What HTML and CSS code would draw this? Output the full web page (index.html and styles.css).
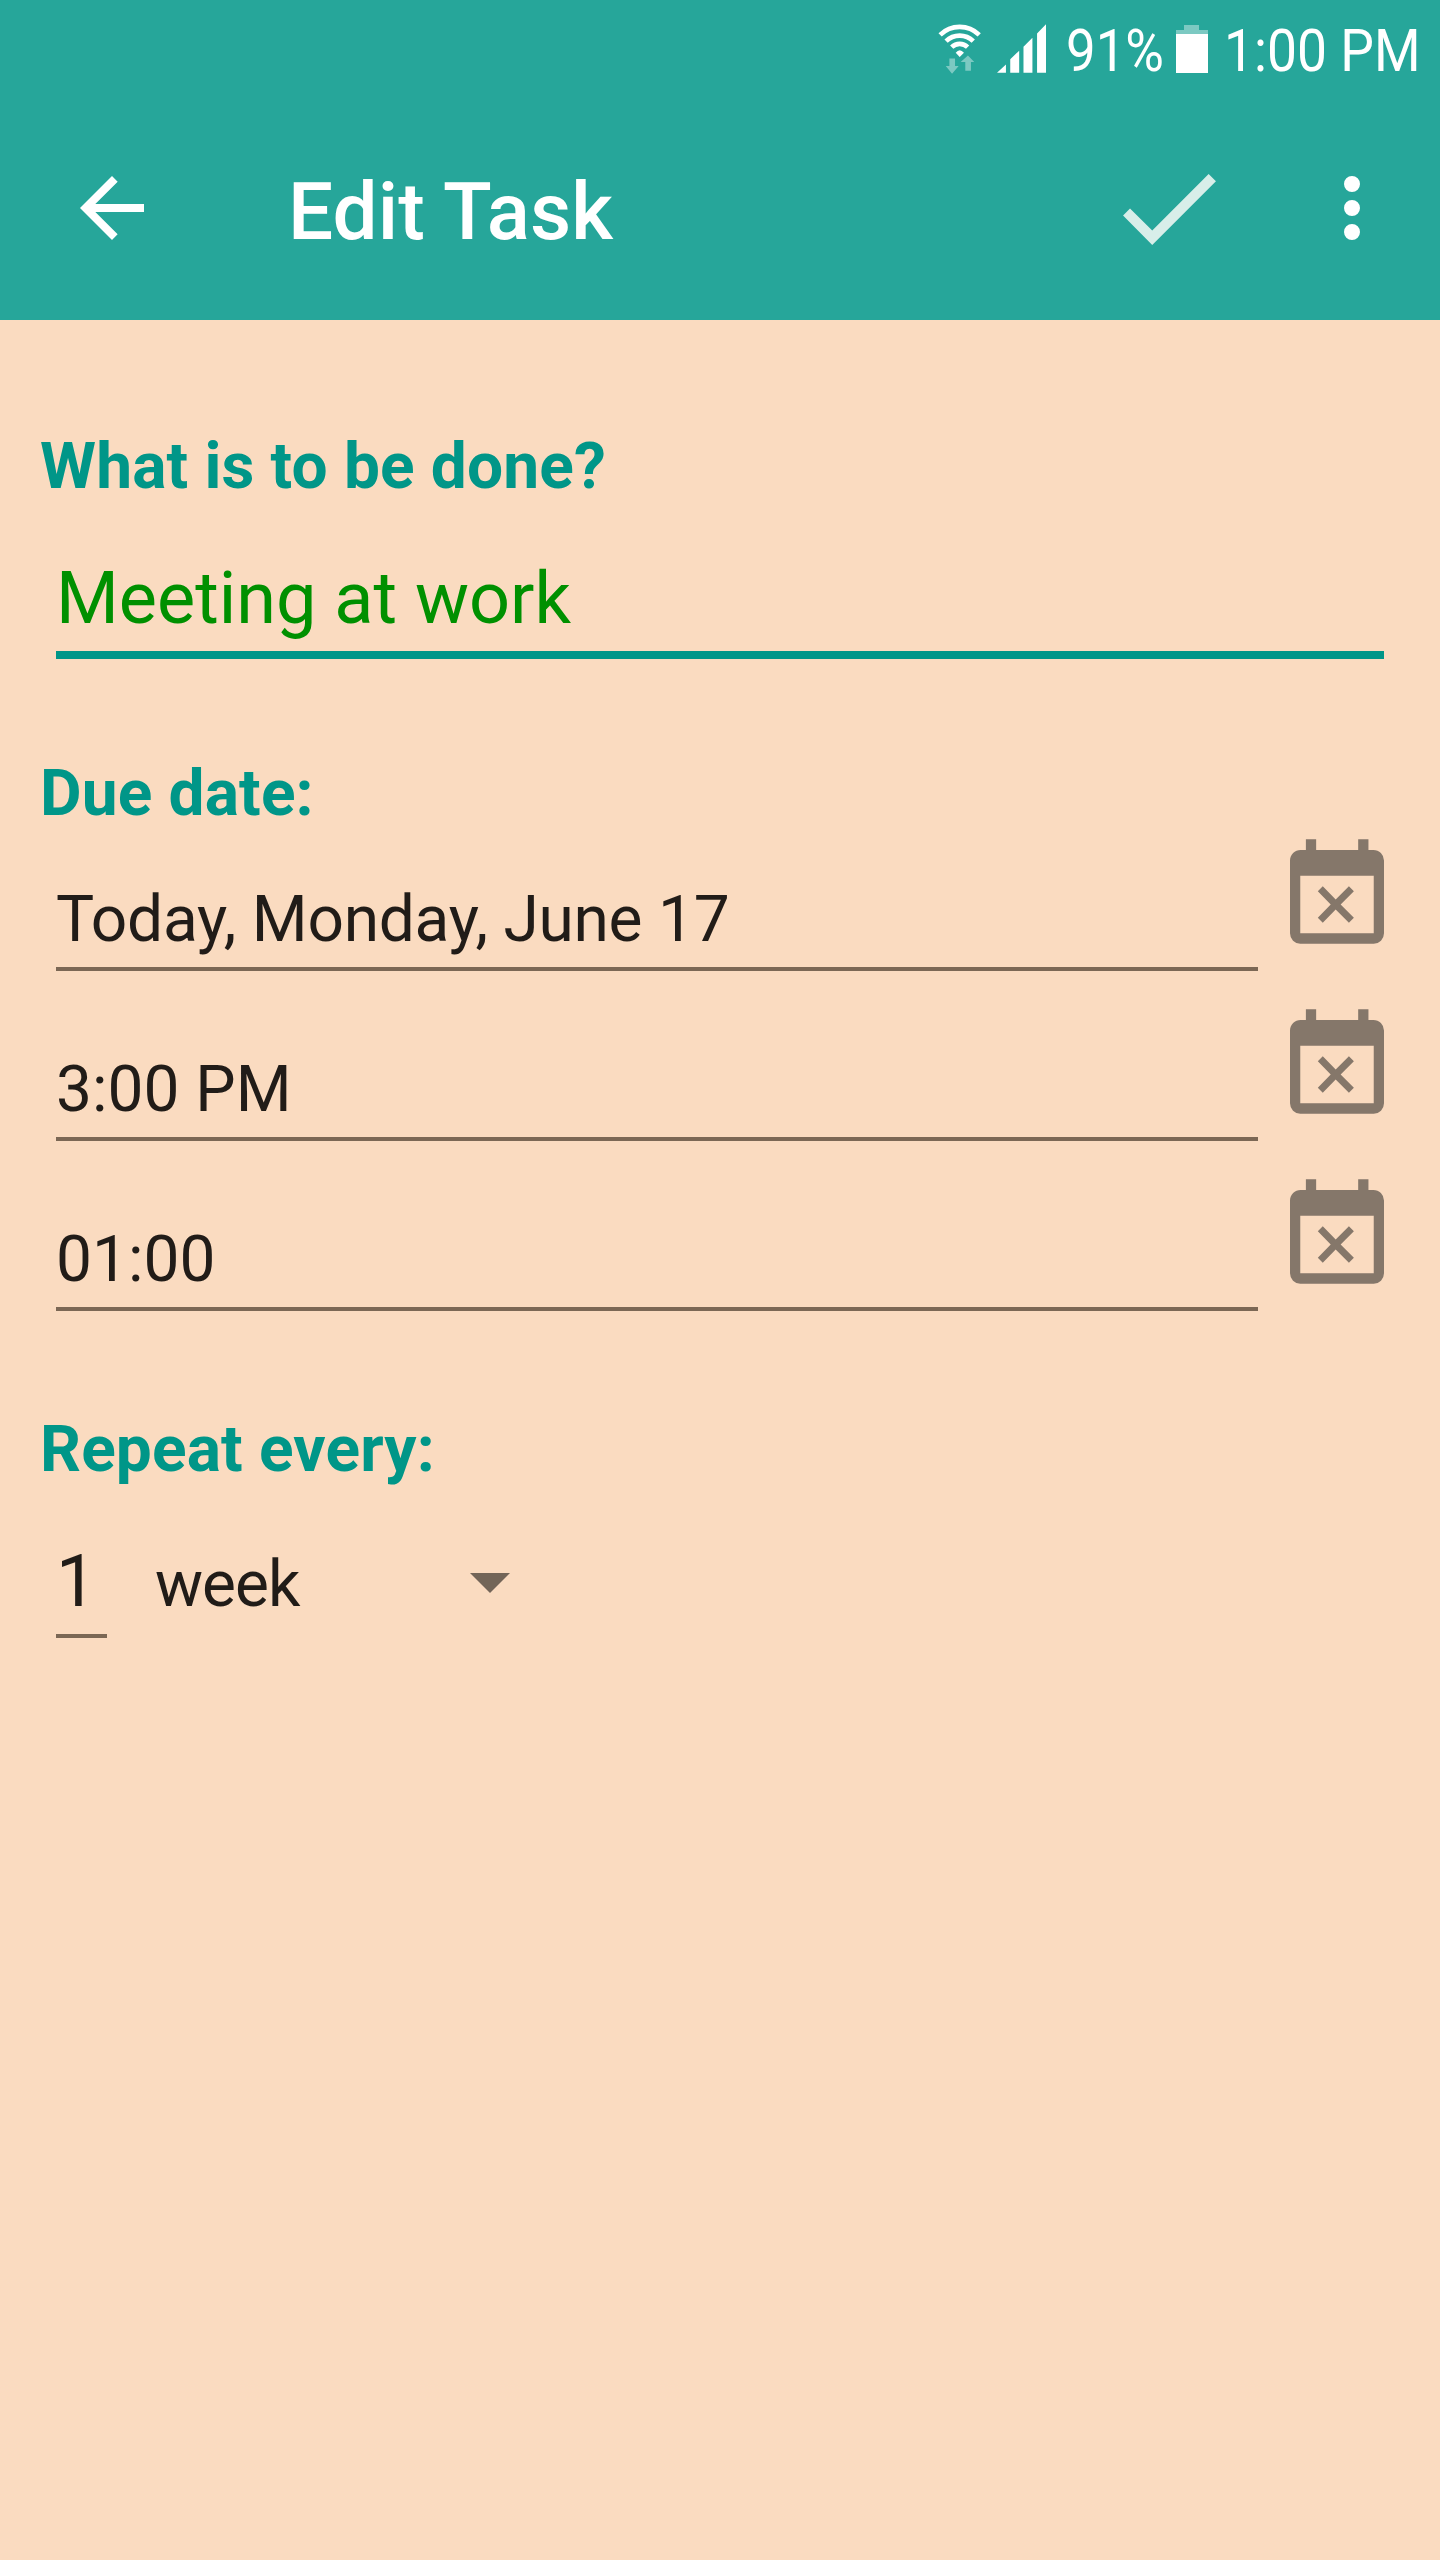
FILE: index.html
```
<!DOCTYPE html>
<html lang="en">
<head>
    <meta charset="UTF-8">
    <meta name="viewport" content="width=device-width, initial-scale=1.0">
    <title>Edit Task</title>
    <link rel="stylesheet" href="styles.css">
</head>
<body>
    <header>
        <div class="status-bar">
            <svg class="wifi" viewBox="50 65 135 160">
                <g fill="none" stroke="#fff" stroke-width="14">
                    <path d="M59 104A84 84 0 0 1 177 104"/>
                    <path d="M77 123A58 58 0 0 1 159 123"/>
                    <path d="M94 141A34 34 0 0 1 142 141"/>
                </g>
                <path fill="#fff" d="M106 158Q118 142 131 158L118 171Z"/>
                <path fill="#fff" opacity=".4" d="M87 175h17v23h11L95 221 76 198h11zM135 212h17v-26h10L143 166 121 186h14z"/>
            </svg>
            <svg class="signal" viewBox="230 72 148 147">
                <path fill="#fff" d="M230 219L257 194V219ZM270 219V178L297 152V219ZM310 219V140L337 113V219ZM351 219V100L378 72V219Z"/>
            </svg>
            <span class="status-text percent">91%</span>
            <svg class="battery" viewBox="0 0 32 48">
                <path fill="#fff" opacity=".4" d="M8 0H23V5H32V9H0V5H8Z"/>
                <path fill="#fff" d="M0 9H32V48H0Z"/>
            </svg>
            <span class="status-text clock">1:00 PM</span>
        </div>
        <div class="app-bar">
            <svg class="icon" viewBox="0 0 24 24"><path fill="#fff" d="M20 11H7.83l5.59-5.59L12 4l-8 8 8 8 1.41-1.41L7.83 13H20v-2z"/></svg>
            <h1>Edit Task</h1>
            <svg class="check" viewBox="128 101 280 214"><path fill="#d8eee9" d="M128 226L149 205 216 271 386 101 408 123 216 315Z"/></svg>
            <svg class="icon" viewBox="0 0 24 24"><path fill="#fff" d="M12 8a2 2 0 1 0 0-4 2 2 0 0 0 0 4zm0 2a2 2 0 1 0 0 4 2 2 0 0 0 0-4zm0 6a2 2 0 1 0 0 4 2 2 0 0 0 0-4z"/></svg>
        </div>
    </header>

    <!-- calendar icon used by the clear buttons -->
    <svg class="defs">
        <symbol id="clear" viewBox="209 57 284 315">
            <path fill-rule="evenodd" d="M257 57H288V89H415V57H446V89H461A32 32 0 0 1 493 121V341A31 31 0 0 1 462 372H240A31 31 0 0 1 209 341V121A32 32 0 0 1 241 89H257ZM240 167V341H462V167Z"/>
            <path d="M308 199L347 239 387 199 402 214 362 254 402 294 387 309 347 269 308 309 293 294 332 254 293 214Z"/>
        </symbol>
    </svg>

    <main>
        <h2>What is to be done?</h2>
        <div class="task-name">Meeting at work</div>

        <h2>Due date:</h2>
        <div class="due">
            <div class="row">
                <div class="field date">Today, Monday, June 17</div>
                <svg class="clear"><use href="#clear"/></svg>
            </div>
            <div class="row">
                <div class="field">3:00 PM</div>
                <svg class="clear"><use href="#clear"/></svg>
            </div>
            <div class="row">
                <div class="field">01:00</div>
                <svg class="clear"><use href="#clear"/></svg>
            </div>
        </div>

        <h2>Repeat every:</h2>
        <div class="repeat">
            <div class="count">1</div>
            <div class="unit">
                <span>week</span>
                <svg class="arrow" viewBox="0 0 40 20"><path d="M0 0H40L20 20Z"/></svg>
            </div>
        </div>
    </main>
</body>
</html>
```
FILE: styles.css
```
/* General Styling */
body {
    margin: 0;
    min-height: 2560px;
    font-family: Roboto, sans-serif;
    background: #fadbc0;
    color: #211c18;
}

svg {
    display: block;
    flex: none;
}

.defs {
    width: 0;
    height: 0;
    position: absolute;
}

header {
    height: 320px;
    background: #26a69a;
    color: white;
}

/* Status bar */
.status-bar {
    display: flex;
    align-items: flex-start;
    justify-content: flex-end;
    height: 96px;
    padding-right: 19px;
    box-sizing: border-box;
}

.wifi {
    width: 45px;
    height: 53px;
    margin: 22px 15px 0 0;
}

.signal {
    width: 49px;
    height: 49px;
    margin: 24px 20px 0 0;
}

.battery {
    width: 32px;
    height: 48px;
    margin: 25px 16px 0 0;
}

.status-text {
    font-size: 60px;
    line-height: 70px;
    margin-top: 16px;
    white-space: nowrap;
    transform: scaleX(0.89);
    transform-origin: left;
}

.percent {
    width: 110px;
    transform: scaleX(0.88);
}

.clock {
    width: 197px;
}

/* App bar */
.app-bar {
    display: flex;
    align-items: center;
    height: 224px;
    padding: 0 40px 0 64px;
}

.app-bar .icon {
    width: 96px;
    height: 96px;
}

.app-bar h1 {
    flex: 1;
    margin: 7px 0 0 128px;
    font-size: 80px;
    line-height: 94px;
    font-weight: 500;
    letter-spacing: 0.1px;
}

.check {
    width: 93px;
    height: 71px;
    margin: 2px 88px 0 0;
}

/* Form */
main {
    padding: 109px 56px 0;
}

h2 {
    margin: 0 0 0 -16px;
    font-size: 64px;
    line-height: 76px;
    font-weight: 700;
    letter-spacing: 0.15px;
    color: #009688;
}

.task-name {
    height: 95px;
    margin: 51px 0 97px;
    font-size: 72px;
    line-height: 85px;
    color: #009000;
    border-bottom: 8px solid #009688;
}

.due {
    display: flex;
    flex-direction: column;
    gap: 30px;
    margin: -1px 0 101px;
}

.row {
    display: flex;
    gap: 32px;
}

.field {
    flex: 1;
    height: 85px;
    padding-top: 51px;
    font-size: 64px;
    line-height: 76px;
    border-bottom: 4px solid #7b6754;
}

.date {
    letter-spacing: -0.24px;
}

.clear {
    width: 94px;
    height: 105px;
    margin-top: 8px;
    fill: #85776a;
}

/* Repeat */
.repeat {
    display: flex;
    margin-top: -1px;
}

.count {
    width: 51px;
    height: 95px;
    padding-top: 52px;
    font-size: 72px;
    line-height: 85px;
    border-bottom: 4px solid #7b6754;
}

.unit {
    display: flex;
    justify-content: space-between;
    width: 355px;
    margin-left: 48px;
    padding-top: 60px;
    font-size: 64px;
    line-height: 76px;
    letter-spacing: -1px;
}

.arrow {
    width: 40px;
    height: 20px;
    margin-top: 26px;
    fill: #736558;
}
```
